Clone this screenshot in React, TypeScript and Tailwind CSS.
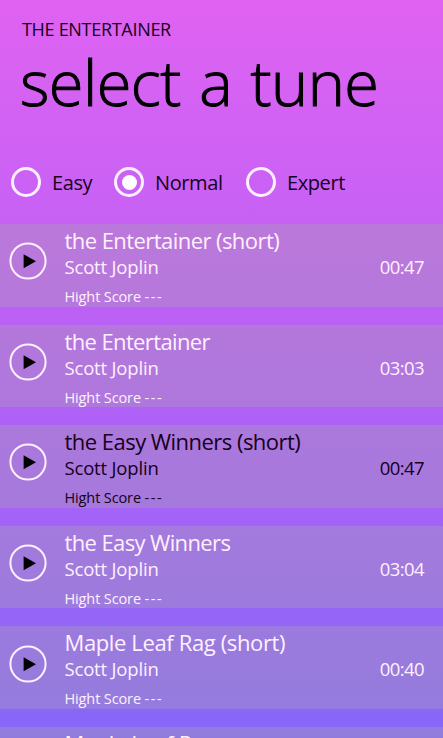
import React from 'react';
import { clsx } from 'clsx';

type Tune = {
  title: string;
  artist?: string;
  time?: string;
  dark?: boolean;
  tracking: string;
};

const tunes: Tune[] = [
  { title: 'the Entertainer (short)', artist: 'Scott Joplin', time: '00:47', tracking: 'tracking-[-0.56px]' },
  { title: 'the Entertainer', artist: 'Scott Joplin', time: '03:03', tracking: 'tracking-[-0.62px]' },
  { title: 'the Easy Winners (short)', artist: 'Scott Joplin', time: '00:47', dark: true, tracking: 'tracking-[-0.53px]' },
  { title: 'the Easy Winners', artist: 'Scott Joplin', time: '03:04', tracking: 'tracking-[-0.62px]' },
  { title: 'Maple Leaf Rag (short)', artist: 'Scott Joplin', time: '00:40', tracking: 'tracking-[-0.37px]' },
  { title: 'Maple Leaf Rag', tracking: 'tracking-[-0.37px]' },
];

function Level({ label, checked, width }: { label: string; checked?: boolean; width: string }) {
  return (
    <div className={clsx('flex h-[30px] shrink-0 items-center', width)}>
      <div className="flex h-[30px] w-[30px] shrink-0 items-center justify-center rounded-full border-3 border-[#fff0ff]">
        {checked && <div className="h-[15px] w-[15px] rounded-full bg-white" />}
      </div>
      <span className="ml-[11px] pt-[2px] text-[20px] leading-[28px] tracking-[-0.4px] whitespace-nowrap">{label}</span>
    </div>
  );
}

function PlayIcon() {
  return (
    <svg width="38" height="38" viewBox="0 0 38 38" className="shrink-0">
      <circle cx="19" cy="19" r="17.6" fill="none" stroke="#fff0ff" strokeWidth="2" />
      <path d="M14.6 12.3 L27 19.3 L14.6 26.3 Z" fill="#000" />
    </svg>
  );
}

function TuneRow({ tune }: { tune: Tune }) {
  return (
    <div className={clsx('flex h-[82.5px] shrink-0 bg-[#a8a2ac]/35', tune.dark ? 'text-[#150020]' : 'text-[#fff0ff]')}>
      <div className="w-[64.5px] shrink-0 pt-[18.3px] pl-[8.5px]">
        {tune.artist && <PlayIcon />}
      </div>
      <div className="flex-1 pt-px">
        <div className={clsx('text-[22px] leading-[30px] whitespace-nowrap', tune.tracking)}>{tune.title}</div>
        {tune.artist && (
          <>
            <div className="flex justify-between pr-[19px] text-[18.5px] leading-[24px]">
              <span className="tracking-[-0.18px]">{tune.artist}</span>
              <span className="tracking-[-0.6px]">{tune.time}</span>
            </div>
            <div className="pt-[8px] text-[14.5px] leading-[20px] tracking-[-0.12px]">
              Hight Score <span className="tracking-[1.5px]">---</span>
            </div>
          </>
        )}
      </div>
    </div>
  );
}

export default function App() {
  return (
    <div className="flex h-[738px] w-[443px] flex-col overflow-hidden bg-linear-to-b from-[#e062f2] via-[#b560f6] to-[#8567f8] font-['Open_Sans','Noto_Sans',sans-serif] text-[#150020]">
      <header className="h-[167px] shrink-0 pt-[17px] pl-[22px]">
        <div className="text-[18px] leading-[24px] tracking-[-0.3px]">THE ENTERTAINER</div>
        <h1 className="-ml-[2px] text-[63px] leading-[81px] font-light tracking-[-0.5px] [word-spacing:2.5px] whitespace-nowrap text-black [-webkit-text-stroke:1px_black]">select a tune</h1>
      </header>

      {/* Difficulty */}
      <div className="flex h-[57px] shrink-0 items-start pl-[11px]">
        <Level label="Easy" width="w-[103px]" />
        <Level label="Normal" checked width="w-[132px]" />
        <Level label="Expert" width="w-[120px]" />
      </div>

      {/* Tune list */}
      <div className="flex flex-col gap-[18.1px]">
        {tunes.map((tune) => (
          <TuneRow key={tune.title} tune={tune} />
        ))}
      </div>
    </div>
  );
}
